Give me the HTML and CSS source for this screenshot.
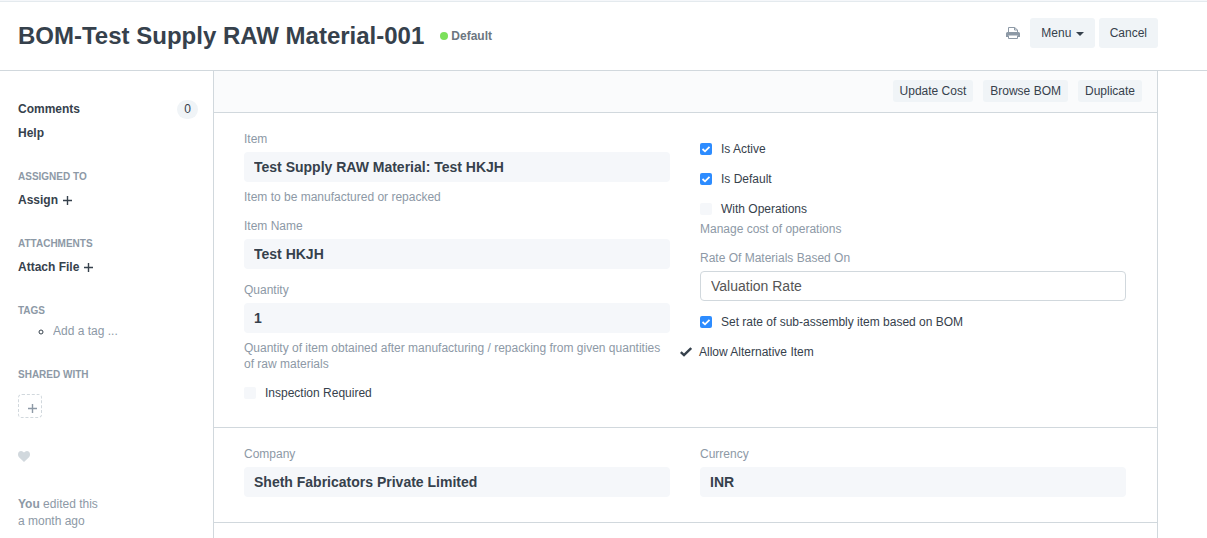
FILE: index.html
```html
<!DOCTYPE html>
<html lang="en">
<head>
<meta charset="utf-8">
<title>BOM-Test Supply RAW Material-001</title>
<link rel="stylesheet" href="styles.css">
</head>
<body>
<div class="top-strip"></div>
<header class="page-head">
  <h1 class="title">BOM-Test Supply RAW Material-001</h1>
  <span class="indicator">Default</span>
  <div class="head-actions">
    <button class="icon-btn" type="button" aria-label="Print">
      <svg width="14" height="12" viewBox="0 0 14 12"><path fill="none" stroke="#8d99a6" d="M2.500 6V.5h6.200l2.800 2.500V6M8.500.5v2.500h3"/><path fill="#8d99a6" d="M1.500 5h11Q14 5 14 6.500V10h-2V8.500H2V10H0V6.500Q0 5 1.500 5z"/><path fill="none" stroke="#8d99a6" d="M2.500 8.500v3h9v-3"/></svg>
    </button>
    <button class="btn" type="button">Menu <span class="caret"></span></button>
    <button class="btn" type="button">Cancel</button>
  </div>
</header>
<div class="page-body">
  <aside class="sidebar">
    <div class="side-row"><a class="side-link" href="#comments">Comments</a><span class="badge">0</span></div>
    <div class="side-row side-help"><a class="side-link" href="#help">Help</a></div>
    <section class="side-group">
      <h2 class="side-title">ASSIGNED TO</h2>
      <a class="side-link side-add" href="#assign">Assign <svg class="plus" viewBox="0 0 9 9"><path d="M4.500 0v9M0 4.500h9"/></svg></a>
    </section>
    <section class="side-group">
      <h2 class="side-title">ATTACHMENTS</h2>
      <a class="side-link side-add" href="#attach">Attach File <svg class="plus" viewBox="0 0 9 9"><path d="M4.500 0v9M0 4.500h9"/></svg></a>
    </section>
    <section class="side-group">
      <h2 class="side-title tight">TAGS</h2>
      <ul class="tags"><li><input class="tag-input" type="text" placeholder="Add a tag ..." aria-label="Add a tag"></li></ul>
    </section>
    <section class="side-group">
      <h2 class="side-title loose">SHARED WITH</h2>
      <button class="share-btn" type="button" aria-label="Share"><svg class="plus" viewBox="0 0 9 9"><path d="M4.500 0v9M0 4.500h9"/></svg></button>
    </section>
    <button class="like-btn" type="button" aria-label="Like"><svg width="12" height="11" viewBox="0 0 12 11"><path fill="#d1d8dd" d="M6 11 1 6.200Q0 5.100 0 3.500 0 0 3.200 0 4.700 0 6 1.600 7.300 0 8.800 0 12 0 12 3.500q0 1.600-1 2.700z"/></svg></button>
    <p class="edited"><strong>You</strong> edited this<br>a month ago</p>
  </aside>
  <main class="form">
    <div class="toolbar">
      <button class="btn-xs" type="button">Update Cost</button>
      <button class="btn-xs" type="button">Browse BOM</button>
      <button class="btn-xs" type="button">Duplicate</button>
    </div>
    <section class="section">
      <div class="col">
        <div class="field">
          <label for="item">Item</label>
          <input class="control" id="item" value="Test Supply RAW Material: Test HKJH" readonly>
          <p class="help">Item to be manufactured or repacked</p>
        </div>
        <div class="field">
          <label for="item-name">Item Name</label>
          <input class="control" id="item-name" value="Test HKJH" readonly>
        </div>
        <div class="field">
          <label for="qty">Quantity</label>
          <input class="control" id="qty" value="1" readonly>
          <p class="help">Quantity of item obtained after manufacturing / repacking from given quantities of raw materials</p>
        </div>
        <label class="check"><input type="checkbox">Inspection Required</label>
      </div>
      <div class="col checks-first">
        <label class="check"><input type="checkbox" checked>Is Active</label>
        <label class="check"><input type="checkbox" checked>Is Default</label>
        <div class="field">
          <label class="check"><input type="checkbox">With Operations</label>
          <p class="help under-check">Manage cost of operations</p>
        </div>
        <div class="field">
          <label for="rate">Rate Of Materials Based On</label>
          <select class="control editable" id="rate"><option>Valuation Rate</option></select>
        </div>
        <label class="check"><input type="checkbox" checked>Set rate of sub-assembly item based on BOM</label>
        <div class="check ticked"><svg width="12" height="10" viewBox="0 0 12 10"><path fill="none" stroke="#36414c" stroke-width="2.400" d="M.8 5.200 4 8.200 11.200 1"/></svg>Allow Alternative Item</div>
      </div>
    </section>
    <section class="section">
      <div class="field">
        <label for="company">Company</label>
        <input class="control" id="company" value="Sheth Fabricators Private Limited" readonly>
      </div>
      <div class="field">
        <label for="currency">Currency</label>
        <input class="control" id="currency" value="INR" readonly>
      </div>
    </section>
  </main>
</div>
</body>
</html>
```

FILE: styles.css
```css
* { box-sizing: border-box; }
body {
  margin: 0;
  min-height: 100vh;
  display: flex;
  flex-direction: column;
  overflow: hidden;
  background: #fff;
  color: #36414c;
  font: 12px/16px "Helvetica Neue", "Liberation Sans", Arial, sans-serif;
}
button, input, select { font: inherit; color: inherit; margin: 0; }
button { border: 0; padding: 0; background: none; cursor: pointer; }
h1, h2, p, ul { margin: 0; padding: 0; }
a { color: inherit; text-decoration: none; }

.top-strip { height: 2px; background: #f5f7fa; border-bottom: 1px solid #e4eaee; }

.page-head {
  display: flex;
  align-items: center;
  height: 69px;
  padding: 0 49px 0 18px;
  border-bottom: 1px solid #d1d8dd;
}
.title { font-size: 24px; line-height: 30px; font-weight: 700; white-space: nowrap; }
.indicator {
  display: flex;
  align-items: center;
  gap: 3px;
  margin-left: 16px;
  color: #6c7680;
  font-weight: 700;
}
.indicator::before {
  content: "";
  width: 8px;
  height: 8px;
  border-radius: 50%;
  background: #7be05a;
}
.head-actions { display: flex; align-items: center; gap: 4px; margin-left: auto; padding-bottom: 6px; }
.icon-btn { display: flex; margin-right: 6px; }
.btn {
  height: 30px;
  padding: 0 11px;
  border-radius: 3px;
  background: #f0f4f7;
}
.caret {
  display: inline-block;
  margin-left: 1px;
  vertical-align: middle;
  border: 4px solid transparent;
  border-top-color: #36414c;
  border-bottom: 0;
}

.page-body { display: flex; flex: 1; padding-right: 49px; }

.sidebar { flex: none; width: 213px; padding: 28px 15px 0 18px; }
.side-row { display: flex; align-items: center; justify-content: space-between; height: 20px; }
.side-help { margin: 4px 0 -1px; }
.side-link { font-weight: 700; }
.badge {
  min-width: 21px;
  padding: 1px 7px 2px;
  border-radius: 10px;
  background: #f0f4f7;
  text-align: center;
}
.side-group { margin-top: 27px; }
.side-title { margin-bottom: 6px; color: #8d99a6; font-size: 10px; line-height: 16px; font-weight: 700; }
.side-title.tight { margin-bottom: 3px; }
.side-title.loose { margin-bottom: 11px; }
.side-add { display: flex; align-items: center; gap: 5px; height: 18px; }
.plus { width: 9px; height: 9px; fill: none; stroke: currentColor; stroke-width: 1.4; }
.tags { padding-left: 35px; list-style: circle; line-height: 18px; }
.tag-input {
  display: block;
  width: 100%;
  height: 18px;
  padding: 0;
  border: 0;
  outline: 0;
  background: none;
}
.tag-input::placeholder { color: #8d99a6; opacity: 1; }
.share-btn {
  display: flex;
  align-items: center;
  justify-content: center;
  width: 24px;
  height: 24px;
  padding: 4px 0 0 4px;
  border: 1px dashed #d1d8dd;
  border-radius: 4px;
  color: #8d99a6;
}
.like-btn { display: flex; margin-top: 33px; }
.edited { margin-top: 34px; color: #8d99a6; line-height: 17px; }

.form { flex: 1; border: solid #d1d8dd; border-width: 0 1px; }
.toolbar {
  display: flex;
  align-items: center;
  justify-content: flex-end;
  gap: 10px;
  height: 42px;
  padding: 0 15px 2px 0;
  background: #fafbfc;
  border-bottom: 1px solid #d1d8dd;
}
.btn-xs { height: 22px; padding: 0 7px; border-radius: 3px; background: #f0f4f7; }

.section {
  display: grid;
  grid-template-columns: 1fr 1fr;
  gap: 30px;
  padding: 18px 31px 25px 30px;
  border-bottom: 1px solid #d1d8dd;
}
.col { display: flex; flex-direction: column; gap: 13px; }
.checks-first { padding-top: 10px; }
.field > label:not(.check) { display: block; margin-bottom: 5px; color: #8d99a6; }
.control {
  display: block;
  width: 100%;
  height: 30px;
  padding: 0 10px;
  border: 0;
  border-radius: 4px;
  outline: 0;
  background: #f5f7fa;
  font-size: 14px;
  font-weight: 700;
}
.control.editable {
  appearance: none;
  border: 1px solid #d1d8dd;
  background: #fff;
  color: #555;
  font-weight: 400;
}
.help { margin-top: 7px; color: #8d99a6; }
.help.under-check { margin-top: 3px; }
.check { display: flex; align-items: center; gap: 9px; height: 17px; padding-bottom: 2px; }
.check input {
  appearance: none;
  flex: none;
  width: 12px;
  height: 12px;
  border-radius: 2px;
  background: #f5f7fa;
}
.check input:checked {
  background: #2d8cff url("data:image/svg+xml,%3Csvg xmlns='http://www.w3.org/2000/svg' viewBox='0 0 12 12'%3E%3Cpath d='M2.500 6 5 8.300 9.500 3.800' fill='none' stroke='white' stroke-width='1.800'/%3E%3C/svg%3E");
}
.ticked { gap: 7px; margin-left: -20px; }
```
